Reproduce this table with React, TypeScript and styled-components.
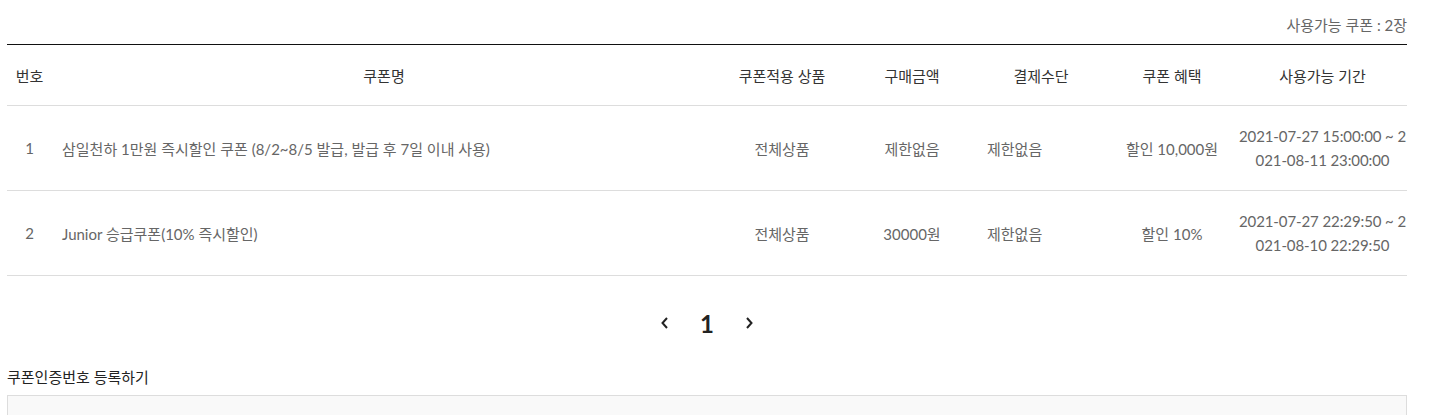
import styled, { createGlobalStyle } from "styled-components";

interface CouponType {
  id: number,
  name: string,
  target: string,
  minPrice: string,
  payment: string,
  benefit: string,
  period: string,
};

const coupons: CouponType[] = [
  {
    id: 1,
    name: "삼일천하 1만원 즉시할인 쿠폰 (8/2~8/5 발급, 발급 후 7일 이내 사용)",
    target: "전체상품",
    minPrice: "제한없음",
    payment: "제한없음",
    benefit: "할인 10,000원",
    period: "2021-07-27 15:00:00 ~ 2021-08-11 23:00:00",
  },
  {
    id: 2,
    name: "Junior 승급쿠폰(10% 즉시할인)",
    target: "전체상품",
    minPrice: "30000원",
    payment: "제한없음",
    benefit: "할인 10%",
    period: "2021-07-27 22:29:50 ~ 2021-08-10 22:29:50",
  },
];

const columns = [
  { title: "번호", width: 45 },
  { title: "쿠폰명", width: 664 },
  { title: "쿠폰적용 상품", width: 132 },
  { title: "구매금액", width: 128 },
  { title: "결제수단", width: 130 },
  { title: "쿠폰 혜택", width: 132 },
  { title: "사용가능 기간", width: 169 },
];

const Chevron = ({ dir }: { dir: "left" | "right" }) => (
  <svg width="10" height="14" viewBox="0 0 10 14">
    <path
      d={dir === "left" ? "M7 2 L2.5 7 L7 12" : "M3 2 L7.5 7 L3 12"}
      fill="none"
      stroke="#222"
      strokeWidth="2"
    />
  </svg>
);

const App = () => {
  return (
    <>
      <GlobalStyle />
      <Wrapper>
        <Summary>사용가능 쿠폰 : 2장</Summary>
        <Table>
          <colgroup>
            {columns.map((col) => (
              <col key={col.title} style={{ width: col.width }} />
            ))}
          </colgroup>
          <thead>
            <tr>
              {columns.map((col) => (
                <Th key={col.title}>{col.title}</Th>
              ))}
            </tr>
          </thead>
          <tbody>
            {coupons.map((coupon) => (
              <tr key={coupon.id}>
                <Td>{coupon.id}</Td>
                <Td $align="left" $pad={10}>{coupon.name}</Td>
                <Td>{coupon.target}</Td>
                <Td>{coupon.minPrice}</Td>
                <Td $align="left" $pad={11}>{coupon.payment}</Td>
                <Td>{coupon.benefit}</Td>
                <PeriodTd>{coupon.period}</PeriodTd>
              </tr>
            ))}
          </tbody>
        </Table>
        <Pagination>
          <PageArrow><Chevron dir="left" /></PageArrow>
          <PageNumber>1</PageNumber>
          <PageArrow><Chevron dir="right" /></PageArrow>
        </Pagination>
        <RegisterTitle>쿠폰인증번호 등록하기</RegisterTitle>
        <RegisterBox />
      </Wrapper>
    </>
  );
};

export default App;

const GlobalStyle = createGlobalStyle`
  body {
    margin: 0;
    background: #fff;
    font-family: Lato, "Noto Sans CJK KR", sans-serif;
  }
`;

const Wrapper = styled.div`
  width: 1400px;
  margin-left: 7px;
`;

const Summary = styled.div`
  height: 44px;
  line-height: 50px;
  text-align: right;
  font-size: 15px;
  color: #666;
`;

const Table = styled.table`
  width: 1400px;
  table-layout: fixed;
  border-collapse: collapse;
  border-top: 1px solid #111;
`;

const Th = styled.th`
  height: 60px;
  padding: 0;
  font-size: 15px;
  font-weight: normal;
  color: #333;
  border-bottom: 1px solid #ddd;
  text-align: center;
`;

const Td = styled.td<{ $align?: string, $pad?: number }>`
  height: 84px;
  padding: 0 ${({ $pad }) => $pad ?? 0}px;
  font-size: 15px;
  color: #666;
  text-align: ${({ $align }) => $align ?? "center"};
  border-bottom: 1px solid #ddd;
`;

const PeriodTd = styled(Td)`
  word-break: break-all;
  letter-spacing: -0.1px;
  line-height: 24px;
`;

const Pagination = styled.div`
  display: flex;
  justify-content: center;
  align-items: center;
  gap: 30px;
  height: 94px;
`;

const PageArrow = styled.span`
  display: flex;
  align-items: center;
`;

const PageNumber = styled.span`
  font-size: 24px;
  font-weight: bold;
  color: #222;
`;

const RegisterTitle = styled.div`
  font-size: 15px;
  color: #222;
  height: 25px;
  line-height: 14px;
`;

const RegisterBox = styled.div`
  height: 40px;
  border: 1px solid #ddd;
  background: #f9f9f9;
`;
